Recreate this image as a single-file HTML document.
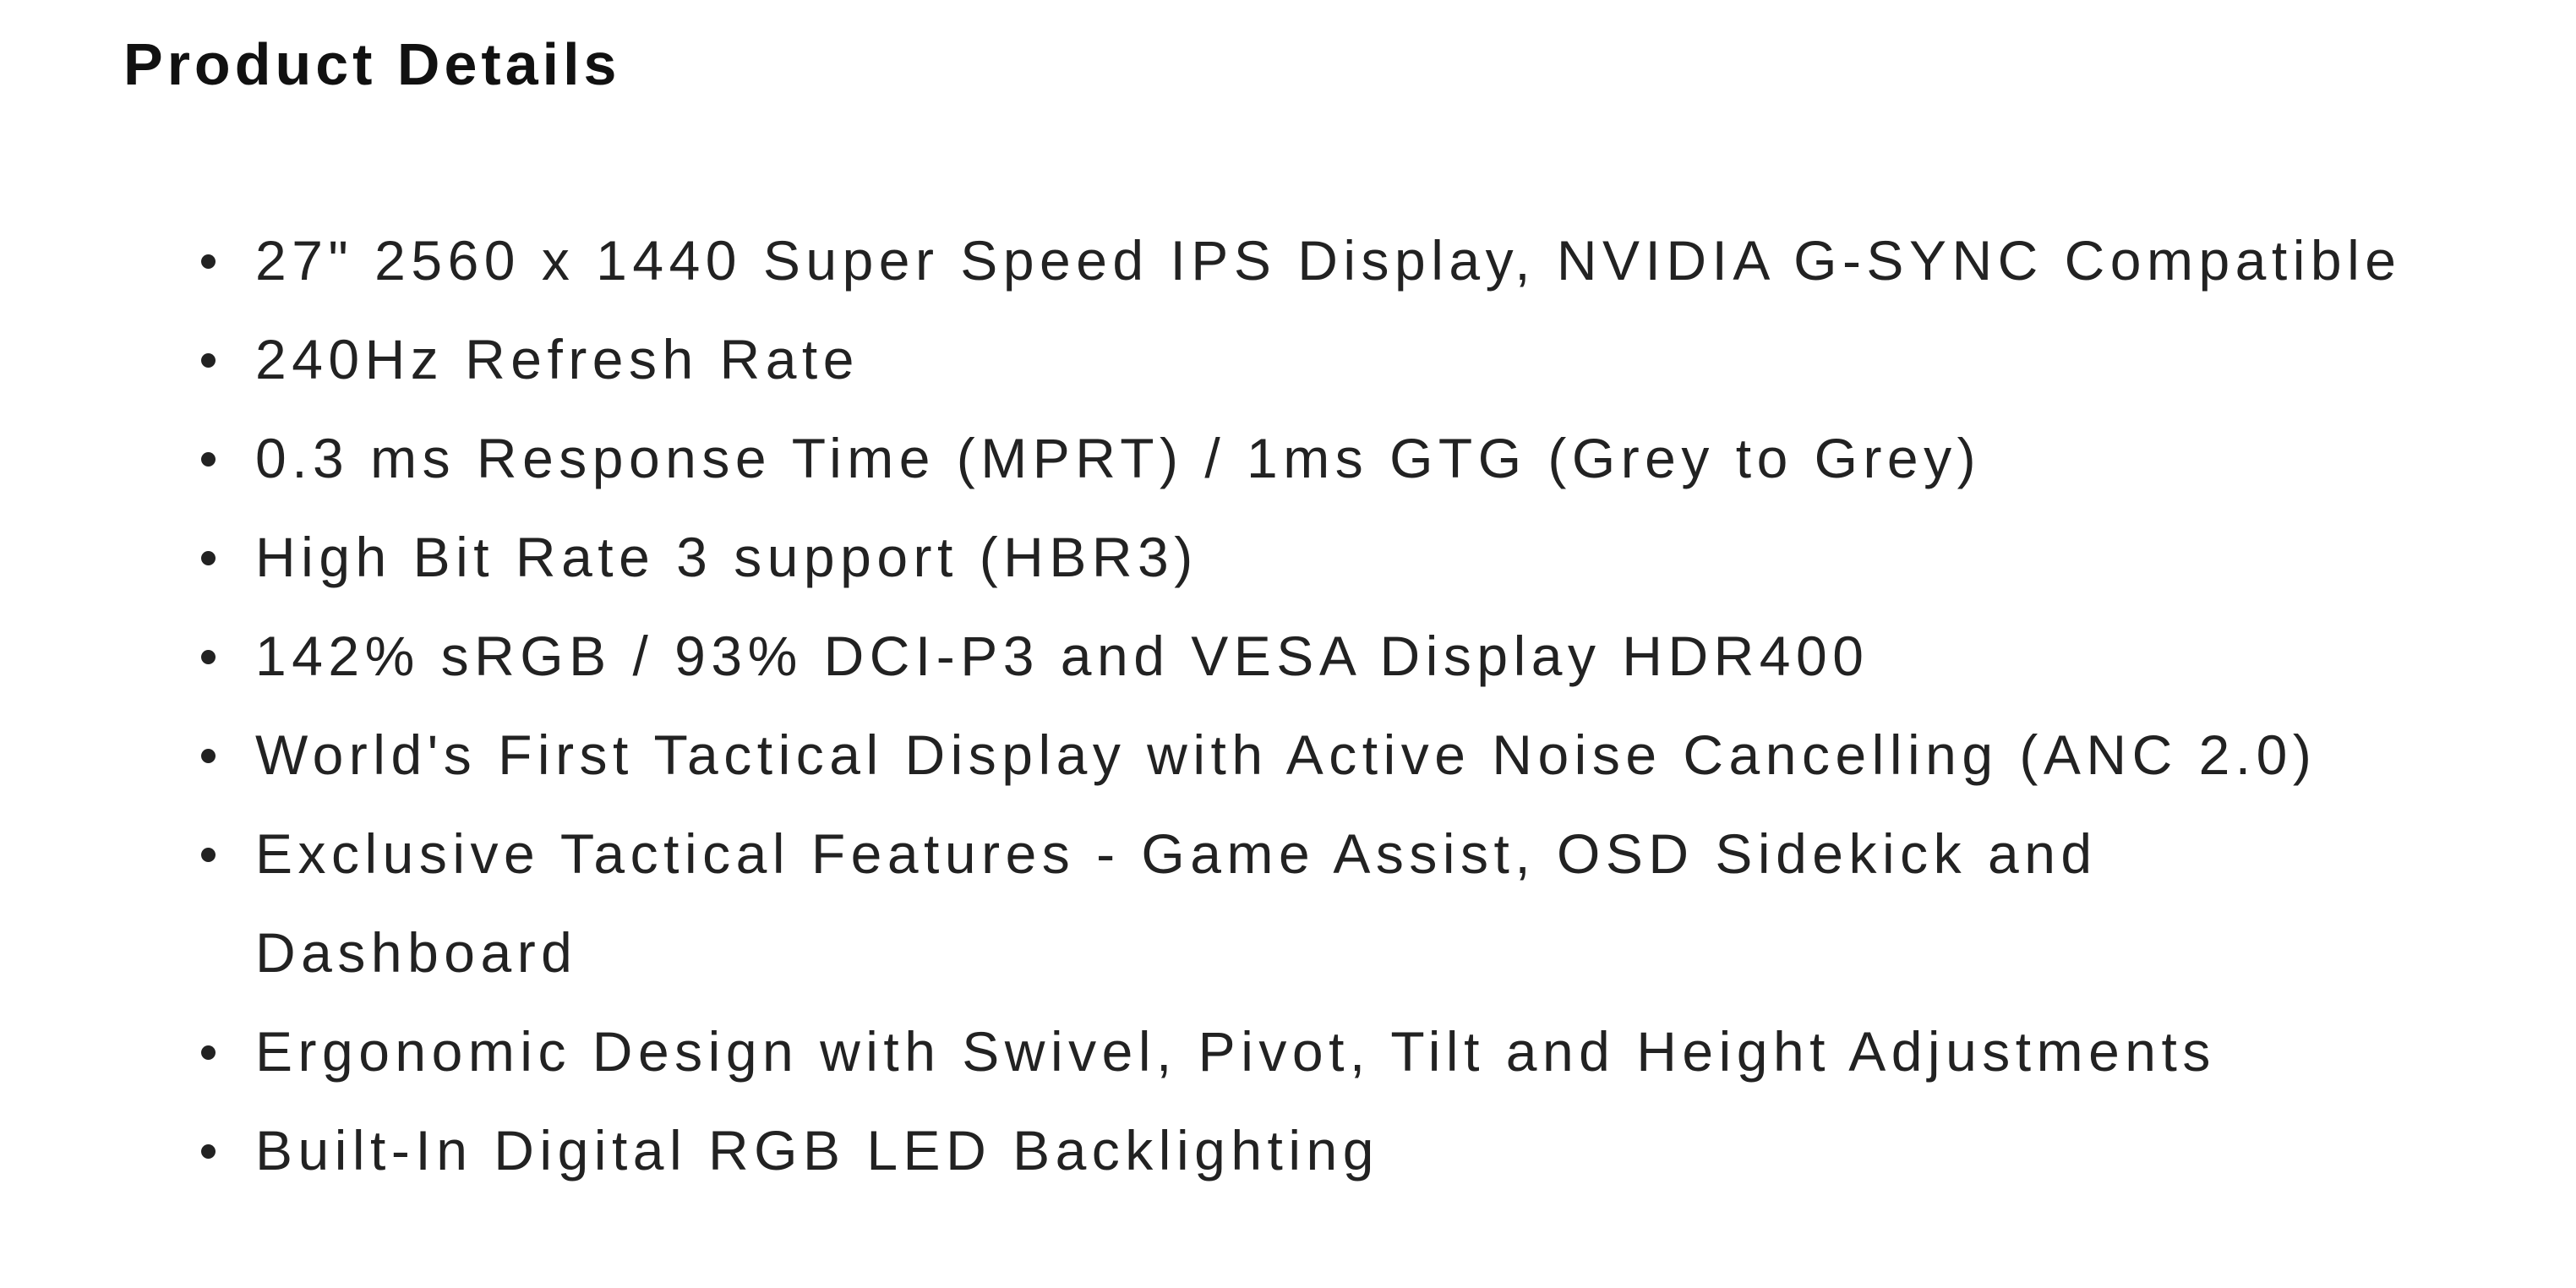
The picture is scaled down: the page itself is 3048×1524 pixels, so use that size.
<!DOCTYPE html>
<html><head><meta charset="utf-8"><style>
html,body{margin:0;padding:0;background:#fff;width:3048px;height:1524px;overflow:hidden}
body{font-family:"Liberation Sans",sans-serif;color:#1e1e1e}
h1{position:absolute;left:146px;top:36px;margin:0;font-size:70px;font-weight:bold;letter-spacing:5px;line-height:80px;color:#111}
ul{position:absolute;left:238px;top:250px;margin:0;padding:0;list-style:none;width:2780px}
li{position:relative;padding-left:64px;font-size:66px;line-height:117px;letter-spacing:6.5px;font-weight:normal;color:#222}
li:before{content:"";position:absolute;left:0;top:51px;width:17px;height:17px;border-radius:50%;background:#222}
</style></head><body>
<h1>Product Details</h1>
<ul>
<li>27" 2560 x 1440 Super Speed IPS Display, NVIDIA G-SYNC Compatible</li>
<li>240Hz Refresh Rate</li>
<li>0.3 ms Response Time (MPRT) / 1ms GTG (Grey to Grey)</li>
<li>High Bit Rate 3 support (HBR3)</li>
<li>142% sRGB / 93% DCI-P3 and VESA Display HDR400</li>
<li>World's First Tactical Display with Active Noise Cancelling (ANC 2.0)</li>
<li>Exclusive Tactical Features - Game Assist, OSD Sidekick and<br>Dashboard</li>
<li>Ergonomic Design with Swivel, Pivot, Tilt and Height Adjustments</li>
<li>Built-In Digital RGB LED Backlighting</li>
</ul>
</body></html>
